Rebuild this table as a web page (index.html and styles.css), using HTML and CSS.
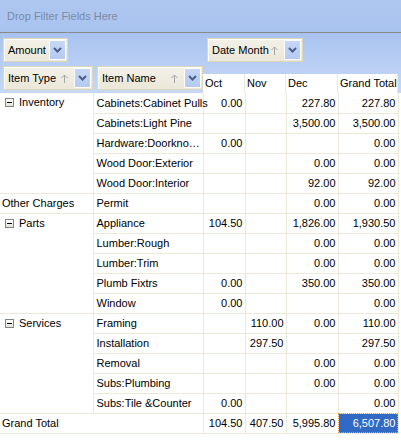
FILE: index.html
```html
<!DOCTYPE html>
<html>
<head>
<meta charset="utf-8">
<link rel="stylesheet" href="styles.css">
</head>
<body>
<div class="pivot">
  <div class="filter-bar">Drop Filter Fields Here</div>
  <div class="top">
    <div class="data-fields">
      <div class="left-slot">
        <div class="fbtn amount"><span class="lbl">Amount</span><span class="dd"><svg width="9" height="6" viewBox="0 0 9 6"><path d="M1 1 L4.5 4.5 L8 1" fill="none" stroke="#4a5f88" stroke-width="2"/></svg></span></div>
      </div>
      <div class="fbtn datemonth"><span class="lbl">Date Month</span><span class="sort"><svg width="7" height="9" viewBox="0 0 7 9"><path d="M3.5 9 V1 M0.5 4 L3.5 1 L6.5 4" fill="none" stroke="#a5a5a5" stroke-width="1"/></svg></span><span class="dd"><svg width="9" height="6" viewBox="0 0 9 6"><path d="M1 1 L4.5 4.5 L8 1" fill="none" stroke="#4a5f88" stroke-width="2"/></svg></span></div>
    </div>
    <div class="header-row">
      <div class="fbtn itemtype"><span class="lbl">Item Type</span><span class="sort"><svg width="7" height="9" viewBox="0 0 7 9"><path d="M3.5 9 V1 M0.5 4 L3.5 1 L6.5 4" fill="none" stroke="#a5a5a5" stroke-width="1"/></svg></span><span class="dd"><svg width="9" height="6" viewBox="0 0 9 6"><path d="M1 1 L4.5 4.5 L8 1" fill="none" stroke="#4a5f88" stroke-width="2"/></svg></span></div>
      <div class="fbtn itemname"><span class="lbl">Item Name</span><span class="sort"><svg width="7" height="9" viewBox="0 0 7 9"><path d="M3.5 9 V1 M0.5 4 L3.5 1 L6.5 4" fill="none" stroke="#a5a5a5" stroke-width="1"/></svg></span><span class="dd"><svg width="9" height="6" viewBox="0 0 9 6"><path d="M1 1 L4.5 4.5 L8 1" fill="none" stroke="#4a5f88" stroke-width="2"/></svg></span></div>
      <div class="colhead c-oct">Oct</div>
      <div class="colhead c-nov">Nov</div>
      <div class="colhead c-dec">Dec</div>
      <div class="colhead c-gt">Grand Total</div>
    </div>
  </div>
  <table class="grid">
    <colgroup>
      <col class="w-type"><col class="w-name"><col class="w-oct"><col class="w-nov"><col class="w-dec"><col class="w-gt">
    </colgroup>
    <tbody>
      <tr><td class="grp" rowspan="5"><span class="exp"></span>Inventory</td><td class="nm">Cabinets:Cabinet Pulls</td><td class="v">0.00</td><td class="v"></td><td class="v">227.80</td><td class="v">227.80</td></tr>
      <tr><td class="nm">Cabinets:Light Pine</td><td class="v"></td><td class="v"></td><td class="v">3,500.00</td><td class="v">3,500.00</td></tr>
      <tr><td class="nm">Hardware:Doorkno…</td><td class="v">0.00</td><td class="v"></td><td class="v"></td><td class="v">0.00</td></tr>
      <tr><td class="nm">Wood Door:Exterior</td><td class="v"></td><td class="v"></td><td class="v">0.00</td><td class="v">0.00</td></tr>
      <tr><td class="nm">Wood Door:Interior</td><td class="v"></td><td class="v"></td><td class="v">92.00</td><td class="v">92.00</td></tr>
      <tr><td class="grp plain">Other Charges</td><td class="nm">Permit</td><td class="v"></td><td class="v"></td><td class="v">0.00</td><td class="v">0.00</td></tr>
      <tr><td class="grp" rowspan="5"><span class="exp"></span>Parts</td><td class="nm">Appliance</td><td class="v">104.50</td><td class="v"></td><td class="v">1,826.00</td><td class="v">1,930.50</td></tr>
      <tr><td class="nm">Lumber:Rough</td><td class="v"></td><td class="v"></td><td class="v">0.00</td><td class="v">0.00</td></tr>
      <tr><td class="nm">Lumber:Trim</td><td class="v"></td><td class="v"></td><td class="v">0.00</td><td class="v">0.00</td></tr>
      <tr><td class="nm">Plumb Fixtrs</td><td class="v">0.00</td><td class="v"></td><td class="v">350.00</td><td class="v">350.00</td></tr>
      <tr><td class="nm">Window</td><td class="v">0.00</td><td class="v"></td><td class="v"></td><td class="v">0.00</td></tr>
      <tr><td class="grp" rowspan="5"><span class="exp"></span>Services</td><td class="nm">Framing</td><td class="v"></td><td class="v">110.00</td><td class="v">0.00</td><td class="v">110.00</td></tr>
      <tr><td class="nm">Installation</td><td class="v"></td><td class="v">297.50</td><td class="v"></td><td class="v">297.50</td></tr>
      <tr><td class="nm">Removal</td><td class="v"></td><td class="v"></td><td class="v">0.00</td><td class="v">0.00</td></tr>
      <tr><td class="nm">Subs:Plumbing</td><td class="v"></td><td class="v"></td><td class="v">0.00</td><td class="v">0.00</td></tr>
      <tr><td class="nm">Subs:Tile &amp;Counter</td><td class="v">0.00</td><td class="v"></td><td class="v"></td><td class="v">0.00</td></tr>
      <tr class="total"><td class="grp plain" colspan="2">Grand Total</td><td class="v">104.50</td><td class="v">407.50</td><td class="v">5,995.80</td><td class="v sel">6,507.80</td></tr>
    </tbody>
  </table>
</div>
</body>
</html>
```

FILE: styles.css
```css
* { box-sizing: border-box; }
html, body { margin: 0; padding: 0; background: #ffffff; }
body { font-family: "Liberation Sans", Arial, sans-serif; font-size: 11px; color: #000; }

.pivot { width: 401px; }

.filter-bar {
  height: 33px;
  padding-left: 7px;
  line-height: 32px;
  color: #7b8aa3;
  background: linear-gradient(#aec7f1, #a9c3ef);
  border-bottom: 1px solid #8a8a8a;
}

.top {
  background: linear-gradient(#a9c3ef, #c6d8f7);
}

.data-fields {
  display: flex;
  height: 31px;
  padding-top: 5px;
}
.left-slot { width: 207px; padding-left: 3px; }

.fbtn {
  display: flex;
  align-items: center;
  height: 24px;
  background: linear-gradient(#f3f1e8, #ebe8d9);
  border: 1px solid #ddd7c0;
  box-shadow: inset 1px 1px 0 #ffffff;
}
.fbtn .lbl { padding-left: 4px; flex: 1; white-space: nowrap; }
.fbtn .sort { width: 10px; display: flex; align-items: center; margin-right: 3px; }
.fbtn .dd {
  width: 17px;
  height: 20px;
  margin-right: 1px;
  display: flex;
  align-items: center;
  justify-content: center;
  background: linear-gradient(#c7d7f6, #b4caf1);
  border: 1px solid #ffffff;
}
.amount { width: 65px; }
.datemonth { width: 96px; }

.header-row {
  display: flex;
  align-items: flex-end;
  height: 29px;
}
.itemtype { width: 90px; margin-left: 3px; margin-bottom: 3px; }
.itemname { width: 106px; margin-left: 4px; margin-bottom: 3px; }
.colhead {
  height: 19px;
  background: #ffffff;
  line-height: 18px;
  padding-left: 2px;
  border-right: 1px solid #ece9d8;
}
.c-oct { width: 42px; }
.c-nov { width: 41px; }
.c-dec { width: 52px; }
.c-gt { width: 60px; }

.grid {
  border-collapse: collapse;
  table-layout: fixed;
  width: 398px;
}
.w-type { width: 93px; }
.w-name { width: 110px; }
.w-oct { width: 42px; }
.w-nov { width: 41px; }
.w-dec { width: 52px; }
.w-gt { width: 60px; }

.grid td {
  height: 20px;
  padding: 0 2px;
  border: 1px solid #ece9d8;
  white-space: nowrap;
  overflow: hidden;
  vertical-align: middle;
}
.grid tr:first-child td { border-top: none; }
.grid td:first-child { border-left: none; }
.grid td.grp { vertical-align: top; padding-top: 3px; padding-left: 5px; }
.grid td.grp.plain { padding-left: 2px; }
.grid tr.total td.grp { vertical-align: middle; padding-top: 0; }
.grid td.nm { padding-left: 3px; padding-right: 0; overflow: visible; }
.grid td.v { text-align: right; }

.exp {
  display: inline-block;
  width: 9px;
  height: 9px;
  border: 1px solid #848484;
  background: linear-gradient(#ffffff, #e4e4dc);
  position: relative;
  margin-right: 5px;
  vertical-align: -1px;
}
.exp::after {
  content: "";
  position: absolute;
  left: 1px;
  top: 3px;
  width: 5px;
  height: 1px;
  background: #000;
}

.grid td.sel {
  background: #316ac5;
  color: #ffffff;
  outline: 1px dotted #f0a030;
  outline-offset: -1px;
}
```
